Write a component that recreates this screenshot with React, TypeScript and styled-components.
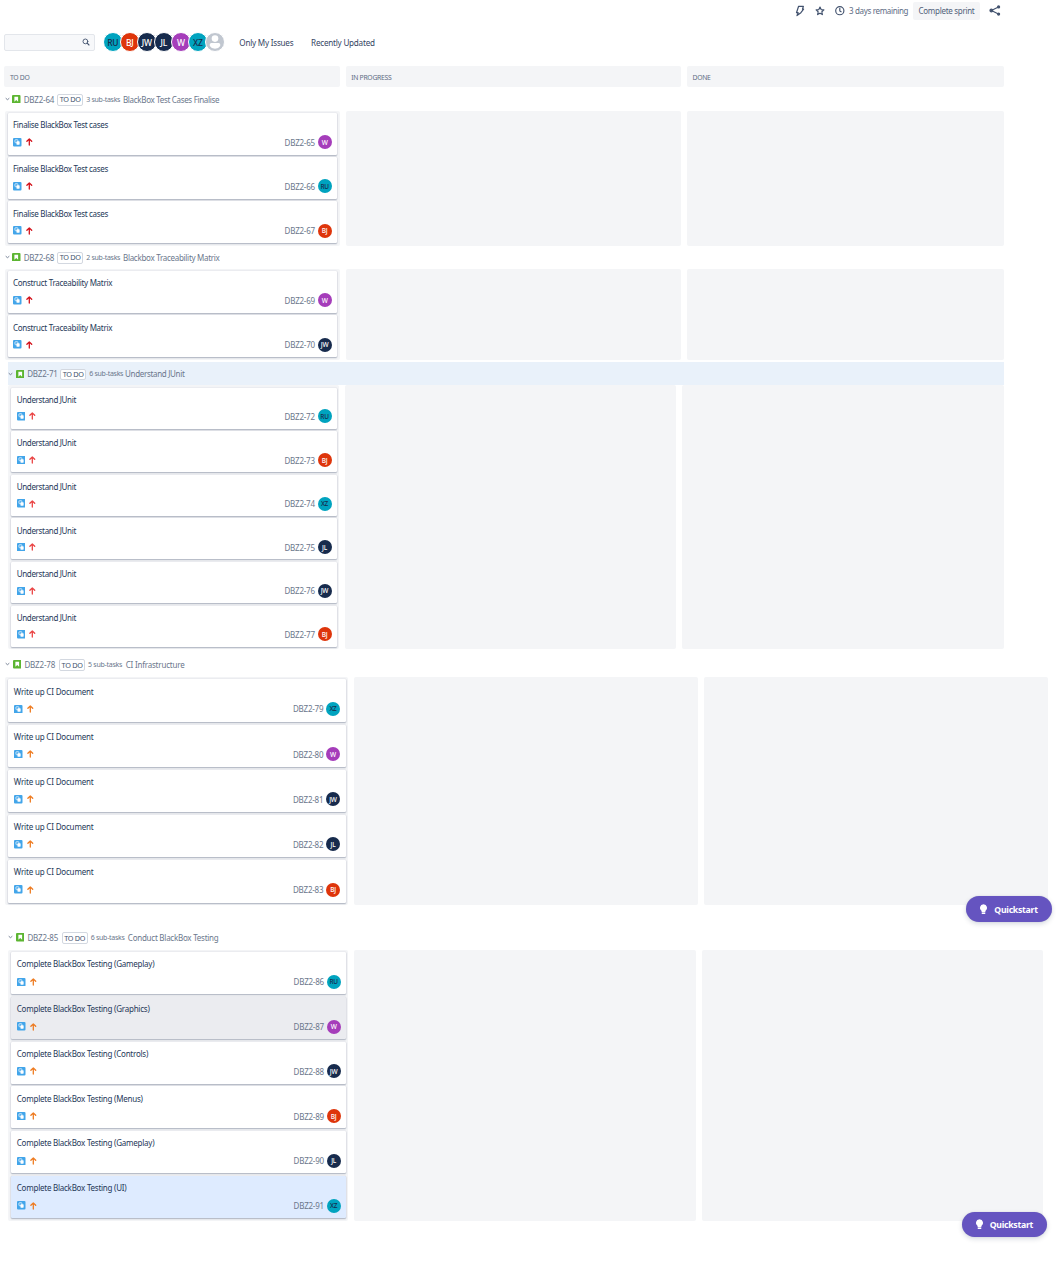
import React from "react";
import styled, { createGlobalStyle } from "styled-components";

const GlobalStyle = createGlobalStyle`
  * { box-sizing: border-box; }
  html, body { margin: 0; background: #fff; }
  body {
    font-family: "Noto Sans", "Open Sans", sans-serif;
    font-size: 8px;
    color: #42526e;
  }
`;

const Page = styled.div`
  position: relative;
  width: 1056px;
  height: 1262px;
  overflow: hidden;
  background: #fff;
`;

const TopBar = styled.header`
  display: flex;
  align-items: center;
  justify-content: flex-end;
  width: 1001px;
  height: 21px;
`;

const TopIcon = styled.span<{ $gap: number }>`
  display: flex;
  margin-right: ${(p) => p.$gap}px;
`;

const Remaining = styled.span`
  width: 64px;
  letter-spacing: -0.34px;
  white-space: nowrap;
  color: #5e6c84;
`;

const SprintButton = styled.button`
  width: 67px;
  height: 18px;
  margin-right: 9px;
  padding: 0;
  border: 0;
  border-radius: 2px;
  background: #f4f5f7;
  color: #505f79;
  font: inherit;
  letter-spacing: -0.29px;
  white-space: nowrap;
`;

const FilterBar = styled.div`
  display: flex;
  align-items: center;
  height: 20px;
  margin-top: 11.4px;
  padding-left: 4px;
`;

const SearchBox = styled.div`
  display: flex;
  align-items: center;
  justify-content: flex-end;
  width: 91px;
  height: 17px;
  padding-right: 4.5px;
  border: 1px solid #e3e6eb;
  border-radius: 2px;
  background: #f7f8fa;
`;

const People = styled.div`
  display: flex;
  margin-left: 7.8px;
`;

const Person = styled.span<{ $bg: string; $fg: string }>`
  display: flex;
  align-items: center;
  justify-content: center;
  width: 20px;
  height: 20px;
  margin-right: -3px;
  border: 0.6px solid #fff;
  border-radius: 50%;
  overflow: hidden;
  background: ${(p) => p.$bg};
  color: ${(p) => p.$fg};
  font-size: 8.5px;
  font-weight: 500;
  letter-spacing: -0.2px;
`;

const Filters = styled.div`
  display: flex;
  gap: 17.7px;
  margin-left: 17.5px;
  font-size: 8.1px;
  letter-spacing: -0.22px;
  color: #344563;
  white-space: nowrap;
`;

const ColumnHeads = styled.div`
  display: grid;
  grid-template-columns: 335.5px 335.5px 317px;
  column-gap: 5.8px;
  height: 21.5px;
  margin: 13.5px 0 0 4.4px;
`;

const ColumnHead = styled.div`
  display: flex;
  align-items: center;
  padding-left: 5.5px;
  padding-top: 1.6px;
  border-radius: 2px;
  background: #f4f5f7;
  color: #5e6c84;
  font-size: 6.8px;
  letter-spacing: -0.28px;
`;

const Swimlane = styled.section<{ $left: number; $width: number; $top: number }>`
  width: ${(p) => p.$width}px;
  margin-left: ${(p) => p.$left}px;
  margin-top: ${(p) => p.$top}px;
`;

const LaneHead = styled.div<{ $height: number; $active?: boolean }>`
  display: flex;
  align-items: center;
  height: ${(p) => p.$height}px;
  background: ${(p) => (p.$active ? "#e9f1fa" : "transparent")};
  color: #6b778c;
  white-space: nowrap;
`;

const LaneKey = styled.span<{ $width: number }>`
  width: ${(p) => p.$width}px;
  margin-left: 3px;
  letter-spacing: -0.2px;
`;

const Lozenge = styled.span`
  display: flex;
  align-items: center;
  justify-content: center;
  width: 26px;
  height: 11.5px;
  margin: 1.4px 3px 0 0;
  border: 1px solid #d3d8e0;
  border-radius: 2px;
  background: #fff;
  color: #42526e;
  font-size: 7.3px;
  line-height: 9px;
  letter-spacing: -0.3px;
`;

const SubTasks = styled.span<{ $gap: number }>`
  width: ${(p) => p.$gap}px;
  font-size: 7px;
  letter-spacing: -0.27px;
`;

const LaneTitle = styled.span<{ $tracking: number }>`
  letter-spacing: ${(p) => p.$tracking}px;
`;

const LaneColumns = styled.div<{ $cols: string; $gap: number; $height: number }>`
  display: grid;
  grid-template-columns: ${(p) => p.$cols};
  column-gap: ${(p) => p.$gap}px;
  height: ${(p) => p.$height}px;
`;

const LaneColumn = styled.div<{ $pad?: string }>`
  display: flex;
  flex-direction: column;
  padding: ${(p) => p.$pad ?? "0"};
  border-radius: 2px;
  background: #f4f5f7;
`;

const Slot = styled.div<{ $height: number }>`
  flex: none;
  height: ${(p) => p.$height}px;
`;

const Card = styled.article<{ $height: number; $bg: string; $padRight: number }>`
  display: flex;
  flex-direction: column;
  height: ${(p) => p.$height}px;
  padding: 6.2px ${(p) => p.$padRight}px 0 5.5px;
  border-radius: 1px;
  background: ${(p) => p.$bg};
  box-shadow: 0 1px 1.5px rgba(9, 30, 66, 0.28), 0 0 1.5px rgba(9, 30, 66, 0.18);
`;

const CardTitle = styled.div<{ $tracking: number }>`
  height: 12px;
  line-height: 12px;
  color: #253858;
  letter-spacing: ${(p) => p.$tracking}px;
  white-space: nowrap;
`;

const CardFoot = styled.div<{ $top: number }>`
  display: flex;
  align-items: center;
  height: 14px;
  margin-top: ${(p) => p.$top}px;
`;

const CardIcons = styled.div<{ $inset: number }>`
  display: flex;
  align-items: center;
  gap: 4px;
  flex: 1;
  padding-left: ${(p) => p.$inset}px;
`;

const CardKey = styled.span`
  margin-right: 2.7px;
  color: #6b778c;
  letter-spacing: -0.23px;
`;

const Avatar = styled.span<{ $bg: string; $fg: string }>`
  display: flex;
  align-items: center;
  justify-content: center;
  width: 14px;
  height: 14px;
  border-radius: 50%;
  background: ${(p) => p.$bg};
  color: ${(p) => p.$fg};
  font-size: 6.5px;
  font-weight: 500;
  letter-spacing: -0.25px;
`;

const Quickstart = styled.button<{ $x: number; $y: number; $w: number }>`
  position: absolute;
  left: ${(p) => p.$x}px;
  top: ${(p) => p.$y}px;
  display: flex;
  align-items: center;
  width: ${(p) => p.$w}px;
  height: 25.5px;
  padding: 1px 0 0 13px;
  gap: 6px;
  border: 0;
  border-radius: 13px;
  background: #6554c0;
  color: #fff;
  font: 700 8.7px "Noto Sans", "Open Sans", sans-serif;
  letter-spacing: -0.26px;
  box-shadow: 0 2px 5px rgba(9, 30, 66, 0.16), 0 0 1px rgba(9, 30, 66, 0.2);
`;

const BoltIcon = () => (
  <svg width="10" height="12" viewBox="0 0 10 12" fill="none" stroke="#42526e" strokeWidth="1.2" strokeLinejoin="round">
    <path d="M3.6 1.3H8.4L7.5 4.1H8.6L5.9 7.7L2 10.6L3.2 7.7H1.5Z" />
  </svg>
);

const StarIcon = () => (
  <svg width="10" height="10" viewBox="0 0 10 10" fill="none" stroke="#42526e" strokeWidth="1.15" strokeLinejoin="round">
    <path d="M5 1.1L6.15 3.6L8.9 3.9L6.85 5.75L7.4 8.6L5 7.2L2.6 8.6L3.15 5.75L1.1 3.9L3.85 3.6Z" />
  </svg>
);

const ClockIcon = () => (
  <svg width="10" height="10" viewBox="0 0 10 10" fill="none" stroke="#42526e" strokeWidth="1.15" strokeLinecap="round">
    <circle cx="4.8" cy="4.7" r="4.1" />
    <path d="M4.8 2.2V4.9L6.1 5.7" />
  </svg>
);

const ShareIcon = () => (
  <svg width="12" height="11" viewBox="0 0 12 11" fill="#42526e" stroke="#42526e" strokeWidth="1.2">
    <path d="M2.4 5.5L9.4 2M2.4 5.5L9.4 9" fill="none" />
    <circle cx="2.3" cy="5.5" r="1.3" />
    <circle cx="9.6" cy="1.9" r="1" />
    <circle cx="9.6" cy="9.1" r="1" />
  </svg>
);

const SearchIcon = () => (
  <svg width="8" height="8" viewBox="0 0 8 8" fill="none" stroke="#42526e" strokeWidth="0.9" strokeLinecap="round">
    <circle cx="3.4" cy="3.4" r="2.4" />
    <path d="M5.2 5.2L7 7" strokeWidth="1.1" />
  </svg>
);

const UnassignedIcon = () => (
  <svg width="18" height="18" viewBox="0 0 18 18" fill="#fff">
    <circle cx="9" cy="5.6" r="3.3" />
    <path d="M3.8 11.6Q3.8 10 5.4 10H12.6Q14.2 10 14.2 11.6V13Q12.5 15.8 9 15.8Q5.5 15.8 3.8 13Z" />
  </svg>
);

const ChevronIcon = () => (
  <svg width="5" height="4" viewBox="0 0 5 4" fill="none" stroke="#6b778c" strokeWidth="0.9">
    <path d="M0.7 1.2L2.5 2.7L4.3 1.2" />
  </svg>
);

const StoryIcon = styled(({ className }: { className?: string }) => (
  <svg className={className} width="8.5" height="8.5" viewBox="0 0 16 16">
    <rect width="16" height="16" rx="2" fill="#5cb531" />
    <path d="M4.5 3.5H11.5V12.5L8 9.5L4.5 12.5Z" fill="#fff" />
  </svg>
))`
  flex: none;
  margin-left: 2.7px;
`;

const SubtaskIcon = () => (
  <svg width="8.5" height="8.5" viewBox="0 0 16 16">
    <rect width="16" height="16" rx="2" fill="#42a5ea" />
    <rect x="3.7" y="3.3" width="5.5" height="5.5" rx="1" fill="none" stroke="#fff" strokeWidth="1.3" />
    <rect x="6.5" y="6.3" width="6" height="6.2" rx="1" fill="#fff" />
  </svg>
);

const PriorityIcon = ({ color }: { color: string }) => (
  <svg width="7" height="8" viewBox="0 0 7 8" fill="none" stroke={color} strokeWidth="1.3" strokeLinecap="round" strokeLinejoin="round">
    <path d="M3.3 7V1M0.9 3.3L3.3 0.9L5.7 3.3" />
  </svg>
);

const BulbIcon = () => (
  <svg width="9" height="11" viewBox="0 0 9 11" fill="#fff">
    <path d="M4.5 0.3A3.7 3.7 0 0 1 6.4 7.1V8.2H2.6V7.1A3.7 3.7 0 0 1 4.5 0.3Z" />
    <rect x="2.7" y="8.5" width="3.6" height="1.5" rx="0.6" />
  </svg>
);

type Who = "RU" | "BJ" | "JW" | "JL" | "W" | "XZ";

const people: Record<Who, { bg: string; fg: string }> = {
  RU: { bg: "#00a3bf", fg: "#172b4d" },
  BJ: { bg: "#de350b", fg: "#fff" },
  JW: { bg: "#172b4d", fg: "#fff" },
  JL: { bg: "#172b4d", fg: "#fff" },
  W: { bg: "#a53dba", fg: "#fff" },
  XZ: { bg: "#00a3bf", fg: "#172b4d" },
};

interface Task { id: number; title: string; who: Who; bg?: string }

interface Lane {
  id: number;
  title: string;
  top: number;
  left: number;
  width: number;
  headHeight: number;
  keyWidth: number;
  subWidth: number;
  tracking: number;
  active?: boolean;
  cols: string;
  gap: number;
  height: number;
  pad: string;
  pitch: number;
  cardHeight: number;
  cardPadRight: number;
  cardTracking: number;
  footTop: number;
  iconInset: number;
  priority: string;
  tasks: Task[];
}

const same = (title: string, first: number, who: Who[]): Task[] =>
  who.map((w, i) => ({ id: first + i, title, who: w }));

const lanes: Lane[] = [
  {
    id: 64, title: "BlackBox Test Cases Finalise", top: 0, left: 4.5, width: 999.5,
    headHeight: 23.4, keyWidth: 33.5, subWidth: 36.8, tracking: -0.32,
    cols: "335px 335.5px 317px", gap: 6, height: 134.8, pad: "2.3px 2.4px 0 3px",
    pitch: 44.2, cardHeight: 41.5, cardPadRight: 5.5, cardTracking: -0.32, footTop: 4, iconInset: 0.2, priority: "#d3121b",
    tasks: same("Finalise BlackBox Test cases", 65, ["W", "RU", "BJ"]),
  },
  {
    id: 68, title: "Blackbox Traceability Matrix", top: 0, left: 4.5, width: 999.5,
    headHeight: 23.3, keyWidth: 33.5, subWidth: 36.8, tracking: -0.29,
    cols: "335px 335.5px 317px", gap: 6, height: 91, pad: "2.4px 2.4px 0 3px",
    pitch: 44.1, cardHeight: 41.5, cardPadRight: 5.5, cardTracking: -0.29, footTop: 4, iconInset: 0.2, priority: "#d3121b",
    tasks: same("Construct Traceability Matrix", 69, ["W", "JW"]),
  },
  {
    id: 71, title: "Understand JUnit", top: 2.4, left: 8, width: 996,
    headHeight: 23.2, keyWidth: 33, subWidth: 35.8, tracking: -0.32, active: true,
    cols: "330.5px 331.5px 321.5px", gap: 6.2, height: 263.5, pad: "2.1px 1.5px 0 3.2px",
    pitch: 43.6, cardHeight: 41, cardPadRight: 5.5, cardTracking: -0.33, footTop: 3.7, iconInset: 0.2, priority: "#ea4444",
    tasks: same("Understand JUnit", 72, ["RU", "BJ", "XZ", "JL", "JW", "BJ"]),
  },
  {
    id: 78, title: "CI Infrastructure", top: 3.2, left: 5.3, width: 1043,
    headHeight: 24.6, keyWidth: 34.6, subWidth: 37.6, tracking: -0.2,
    cols: "343px 343.8px 343.8px", gap: 6.1, height: 228.5, pad: "2.6px 2.3px 0 3px",
    pitch: 45.2, cardHeight: 42.5, cardPadRight: 6, cardTracking: -0.18, footTop: 4.4, iconInset: 0.6, priority: "#ee7c22",
    tasks: same("Write up CI Document", 79, ["XZ", "W", "JW", "JL", "BJ"]),
  },
  {
    id: 85, title: "Conduct BlackBox Testing", top: 20, left: 8.3, width: 1035,
    headHeight: 24.5, keyWidth: 34.2, subWidth: 37.2, tracking: -0.25,
    cols: "340.2px 341.2px 341.2px", gap: 6, height: 270.5, pad: "2.5px 2px 0 3px",
    pitch: 44.75, cardHeight: 42, cardPadRight: 5.9, cardTracking: -0.24, footTop: 4.4, iconInset: 0.5, priority: "#ee7c22",
    tasks: [
      { id: 86, title: "Complete BlackBox Testing (Gameplay)", who: "RU" },
      { id: 87, title: "Complete BlackBox Testing (Graphics)", who: "W", bg: "#ebecf0" },
      { id: 88, title: "Complete BlackBox Testing (Controls)", who: "JW" },
      { id: 89, title: "Complete BlackBox Testing (Menus)", who: "BJ" },
      { id: 90, title: "Complete BlackBox Testing (Gameplay)", who: "JL" },
      { id: 91, title: "Complete BlackBox Testing (UI)", who: "XZ", bg: "#deebff" },
    ],
  },
];

const LaneView = ({ lane }: { lane: Lane }) => (
  <Swimlane $left={lane.left} $width={lane.width} $top={lane.top}>
    <LaneHead $height={lane.headHeight} $active={lane.active}>
      <ChevronIcon />
      <StoryIcon />
      <LaneKey $width={lane.keyWidth}>DBZ2-{lane.id}</LaneKey>
      <Lozenge>TO DO</Lozenge>
      <SubTasks $gap={lane.subWidth}>{lane.tasks.length} sub-tasks</SubTasks>
      <LaneTitle $tracking={lane.tracking}>{lane.title}</LaneTitle>
    </LaneHead>
    <LaneColumns $cols={lane.cols} $gap={lane.gap} $height={lane.height}>
      <LaneColumn $pad={lane.pad}>
        {lane.tasks.map((t) => (
          <Slot key={t.id} $height={lane.pitch}>
            <Card $height={lane.cardHeight} $bg={t.bg ?? "#fff"} $padRight={lane.cardPadRight}>
              <CardTitle $tracking={lane.cardTracking}>{t.title}</CardTitle>
              <CardFoot $top={lane.footTop}>
                <CardIcons $inset={lane.iconInset}>
                  <SubtaskIcon />
                  <PriorityIcon color={lane.priority} />
                </CardIcons>
                <CardKey>DBZ2-{t.id}</CardKey>
                <Avatar $bg={people[t.who].bg} $fg={people[t.who].fg}>{t.who}</Avatar>
              </CardFoot>
            </Card>
          </Slot>
        ))}
      </LaneColumn>
      <LaneColumn />
      <LaneColumn />
    </LaneColumns>
  </Swimlane>
);

export default function App() {
  return (
    <Page>
      <GlobalStyle />
      <TopBar>
        <TopIcon $gap={10}><BoltIcon /></TopIcon>
        <TopIcon $gap={9.5}><StarIcon /></TopIcon>
        <TopIcon $gap={4.5}><ClockIcon /></TopIcon>
        <Remaining>3 days remaining</Remaining>
        <SprintButton>Complete sprint</SprintButton>
        <ShareIcon />
      </TopBar>
      <FilterBar>
        <SearchBox><SearchIcon /></SearchBox>
        <People>
          {(Object.keys(people) as Who[]).map((w) => (
            <Person key={w} $bg={people[w].bg} $fg={people[w].fg}>{w}</Person>
          ))}
          <Person $bg="#c1c7d0" $fg="#fff"><UnassignedIcon /></Person>
        </People>
        <Filters>
          <span>Only My Issues</span>
          <span>Recently Updated</span>
        </Filters>
      </FilterBar>
      <ColumnHeads>
        <ColumnHead>TO DO</ColumnHead>
        <ColumnHead>IN PROGRESS</ColumnHead>
        <ColumnHead>DONE</ColumnHead>
      </ColumnHeads>
      {lanes.map((lane) => <LaneView key={lane.id} lane={lane} />)}
      <Quickstart $x={966.3} $y={896.3} $w={85.7}><BulbIcon />Quickstart</Quickstart>
      <Quickstart $x={961.7} $y={1211.7} $w={85}><BulbIcon />Quickstart</Quickstart>
    </Page>
  );
}
